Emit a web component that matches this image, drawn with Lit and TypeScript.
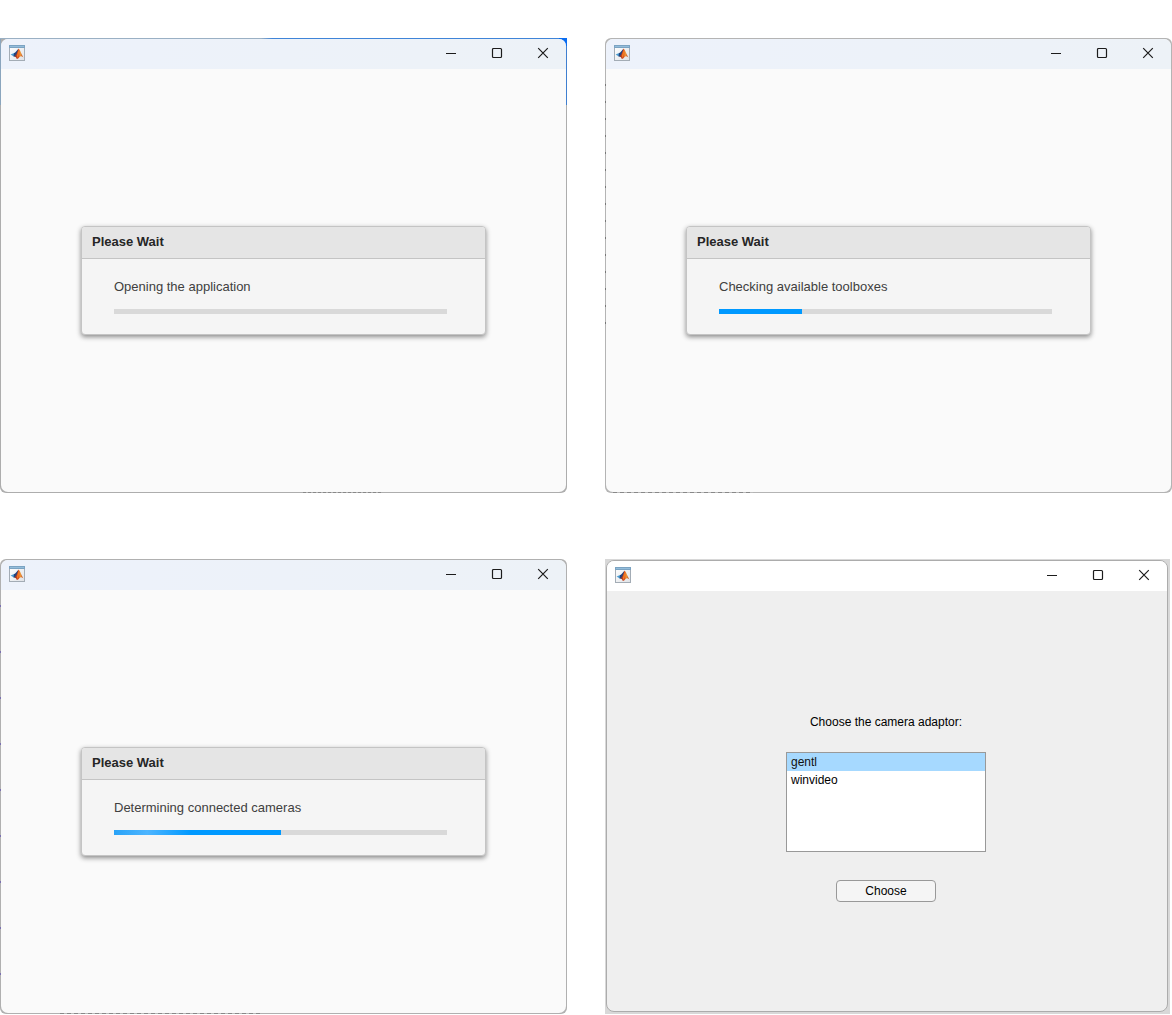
import { LitElement, html, css } from "lit";
import { customElement, property } from "lit/decorators.js";
import { classMap } from "lit/directives/class-map.js";

@customElement("app-window")
class AppWindow extends LitElement {
  @property() variant = "light";

  static styles = css`
    :host {
      display: grid;
      min-width: 0;
    }
    .frame {
      display: grid;
      padding: 1px;
      border-radius: 6px;
      background: #b4b4b4;
    }
    .frame.desktop {
      border-radius: 0 0 6px 6px;
      background:
        repeating-linear-gradient(90deg, #888 0 3px, #b4b4b4 3px 5px) 303px 100% / 78px 1px no-repeat,
        linear-gradient(#0a6cf0, #0a6cf0) 100% 0 / 8px 8px no-repeat,
        linear-gradient(#3f7fd0, #3f7fd0) 100% 0 / 1px 67px no-repeat,
        linear-gradient(90deg, #9ab0c4 0 46%, #3f84d8 48%) 0 0 / 100% 1px no-repeat,
        linear-gradient(#8aa5bd, #8aa5bd) 0 0 / 1px 67px no-repeat,
        #adadad;
    }
    .frame.editor {
      background:
        repeating-linear-gradient(90deg, #888 0 4px, #bbb 4px 7px) 8px 100% / 140px 1px no-repeat,
        repeating-linear-gradient(#777 0 2px, #b4b4b4 2px 17px) 0 46px / 1px 240px no-repeat,
        #b4b4b4;
    }
    .frame.script {
      background:
        repeating-linear-gradient(90deg, #888 0 4px, #bbb 4px 7px) 60px 100% / 200px 1px no-repeat,
        repeating-linear-gradient(#7a6fb0 0 2px, #b0b0b0 2px 46px) 0 46px / 1px 390px no-repeat,
        #b0b0b0;
    }
    .frame.plain {
      margin-right: 2px;
      padding: 1px 2px 2px 1px;
      border-radius: 0;
      background: #d8d8d8;
    }
    .window {
      display: grid;
      grid-template-rows: 30px 1fr;
      border-radius: 7px;
      overflow: hidden;
      background: #fafafa;
    }
    .desktop .bar,
    .editor .bar,
    .script .bar {
      background: linear-gradient(90deg, #edf2fb, #edf2f7);
    }
    .plain .window {
      border: 1px solid #acacac;
      border-radius: 8px;
      background: #efefef;
    }
    .plain .bar {
      background: #fff;
    }
    .bar {
      display: flex;
      align-items: stretch;
      padding: 0 0 0 8px;
    }
    .logo {
      width: 16px;
      height: 16px;
      margin: 6px auto 0 0;
    }
    .control {
      display: grid;
      place-items: center;
      width: 46px;
      padding: 0 0 2px;
      border: 0;
      background: none;
    }
    .control svg {
      width: 12px;
      height: 12px;
      fill: none;
      stroke: #1c1c1c;
      stroke-width: 1.2;
    }
    .body {
      display: grid;
      place-items: center;
    }
  `;

  render() {
    return html`
      <section class=${classMap({ frame: true, [this.variant]: true })}>
        <div class="window">
          <header class="bar">
            <svg class="logo" viewBox="0 0 16 16" aria-hidden="true">
              <defs>
                <linearGradient id="paper" x1="0" y1="0" x2="1" y2="1">
                  <stop offset="0" stop-color="#ffffff" />
                  <stop offset="1" stop-color="#dfe2e6" />
                </linearGradient>
                <linearGradient id="flame" x1="0" y1="0" x2="1" y2="0">
                  <stop offset="0" stop-color="#8c2d22" />
                  <stop offset="0.45" stop-color="#d94a1c" />
                  <stop offset="0.65" stop-color="#f29b38" />
                  <stop offset="1" stop-color="#b83a18" />
                </linearGradient>
              </defs>
              <rect x="0.5" y="0.5" width="15" height="15" fill="url(#paper)" stroke="#a3acb5" />
              <rect x="0" y="0" width="16" height="3" fill="#7ba3c2" />
              <rect x="1" y="1" width="14" height="1" fill="#93bddb" />
              <path d="M1.6 9.6 5.2 8 7.2 9.7 4.8 11.5Z" fill="#4a9bd0" />
              <path d="M5 8.2 C7.2 7.4 8 4.8 9.6 3.8 L8.7 9.6 6.8 11.8 4.6 11.4Z" fill="#23427c" />
              <path d="M9.6 3.6 C11.3 5 12.2 9.4 14.4 12.4 C12.7 11.2 11.6 11 10.6 12 C9.6 13.2 8.9 14 7.8 14 C7.4 12.7 6.6 11.8 5.2 11.5 C7.8 10.5 8.3 6.2 9.6 3.6Z" fill="url(#flame)" />
              <path d="M9.6 5 C10.4 7 10.2 10 8.4 13 L7.9 10.8Z" fill="#f47a20" />
            </svg>
            <button class="control" aria-label="Minimize">
              <svg viewBox="0 0 12 12"><path d="M1 6.5H11" /></svg>
            </button>
            <button class="control" aria-label="Maximize">
              <svg viewBox="0 0 12 12"><rect x="1.5" y="1.5" width="9" height="9" rx="1" /></svg>
            </button>
            <button class="control" aria-label="Close">
              <svg viewBox="0 0 12 12"><path d="M1.2 1.2 10.8 10.8M10.8 1.2 1.2 10.8" /></svg>
            </button>
          </header>
          <div class="body"><slot></slot></div>
        </div>
      </section>
    `;
  }
}

@customElement("wait-dialog")
class WaitDialog extends LitElement {
  @property() message = "";
  @property({ type: Number }) value = 0;
  @property({ type: Boolean }) shine = false;

  static styles = css`
    :host {
      display: block;
      width: 405px;
      max-width: 100%;
      font: 13px/16px "Liberation Sans", Arial, sans-serif;
    }
    .dialog {
      border: 1px solid #c4c4c4;
      border-radius: 4px;
      overflow: hidden;
      background: #f5f5f5;
      box-shadow: 0 2px 5px rgba(0, 0, 0, 0.45);
    }
    .title {
      margin: 0;
      padding: 7px 10px 8px;
      border-bottom: 1px solid #c4c4c4;
      background: #e5e5e5;
      color: #262626;
      font-size: 13px;
      line-height: 16px;
    }
    .content {
      display: grid;
      gap: 14px;
      padding: 20px 38px 20px 32px;
    }
    .message {
      color: #404040;
    }
    .progress {
      appearance: none;
      display: block;
      width: 100%;
      height: 5px;
      border: 0;
      background: #d9d9d9;
    }
    .progress::-webkit-progress-bar {
      background: #d9d9d9;
    }
    .progress::-webkit-progress-value {
      background: #0099ff;
    }
    .progress.shine::-webkit-progress-value {
      background: linear-gradient(90deg, #29a3f7, #4db5ff 20%, #0099ff 46%);
    }
  `;

  render() {
    return html`
      <div class="dialog" role="dialog" aria-labelledby="title">
        <h2 class="title" id="title">Please Wait</h2>
        <div class="content">
          <label class="message" for="progress">${this.message}</label>
          <progress
            id="progress"
            class=${classMap({ progress: true, shine: this.shine })}
            max="100"
            .value=${this.value}
          ></progress>
        </div>
      </div>
    `;
  }
}

@customElement("adaptor-form")
class AdaptorForm extends LitElement {
  static styles = css`
    :host {
      display: block;
      font: 12px/16px "Liberation Sans", Arial, sans-serif;
      color: #000;
    }
    .form {
      display: grid;
      justify-items: center;
      padding: 14px 2px 0 0;
    }
    .list {
      appearance: none;
      box-sizing: border-box;
      width: 200px;
      height: 100px;
      margin: 22px 0 28px;
      padding: 0;
      border: 1px solid #999;
      border-radius: 0;
      background: #fff;
      color: #000;
      font: inherit;
      overflow: hidden;
      outline: 0;
    }
    .item {
      min-height: 18px;
      padding: 2px 4px 0;
      box-sizing: border-box;
      line-height: 16px;
    }
    .item:checked {
      background: linear-gradient(#a6d9ff, #a6d9ff);
    }
    .choose {
      width: 100px;
      height: 22px;
      padding: 0;
      border: 1px solid #999;
      border-radius: 4px;
      background: #f5f5f5;
      color: #000;
      font: inherit;
    }
  `;

  render() {
    return html`
      <form class="form">
        <label for="adaptor">Choose the camera adaptor:</label>
        <select class="list" id="adaptor" size="5">
          <option class="item" selected>gentl</option>
          <option class="item">winvideo</option>
        </select>
        <button class="choose" type="button">Choose</button>
      </form>
    `;
  }
}

@customElement("app-root")
class AppRoot extends LitElement {
  static styles = css`
    :host {
      display: block;
      background: #fff;
    }
    .page {
      box-sizing: border-box;
      min-height: 100vh;
      display: grid;
      grid-template-columns: repeat(2, minmax(0, 1fr));
      grid-template-rows: 1fr 1fr;
      gap: 66px 38px;
      padding: 38px 0 1px;
    }
  `;

  render() {
    return html`
      <main class="page">
        <app-window variant="desktop">
          <wait-dialog message="Opening the application" .value=${0}></wait-dialog>
        </app-window>
        <app-window variant="editor">
          <wait-dialog message="Checking available toolboxes" .value=${25}></wait-dialog>
        </app-window>
        <app-window variant="script">
          <wait-dialog message="Determining connected cameras" .value=${50} shine></wait-dialog>
        </app-window>
        <app-window variant="plain">
          <adaptor-form></adaptor-form>
        </app-window>
      </main>
    `;
  }
}
